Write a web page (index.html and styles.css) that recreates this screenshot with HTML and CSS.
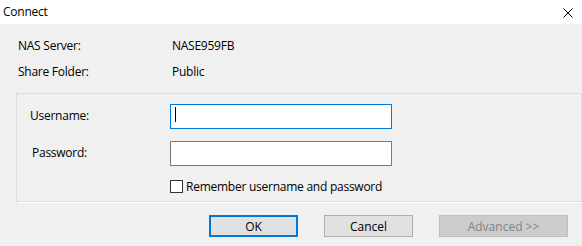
FILE: index.html
```html
<!DOCTYPE html>
<html lang="en">
<head>
  <meta charset="UTF-8">
  <title>Connect</title>
  <link rel="stylesheet" href="styles.css">
</head>
<body>

  <div class="titlebar">
    <span class="title">Connect</span>
    <svg class="close" width="10" height="10" viewBox="0 0 10 10">
      <path d="M0.5 0.5 L9.5 9.5 M9.5 0.5 L0.5 9.5" stroke="#000" stroke-width="1" fill="none"/>
    </svg>
  </div>

  <div class="dialog">
    <div class="info">
      <div class="info-row"><span class="info-label">NAS Server:</span><span>NASE959FB</span></div>
      <div class="info-row"><span class="info-label">Share Folder:</span><span>Public</span></div>
    </div>

    <div class="group">
      <div class="field">
        <label class="field-label">Username:</label>
        <div class="textbox-wrap">
          <input type="text" class="textbox focused">
          <span class="caret"></span>
        </div>
      </div>
      <div class="field">
        <label class="field-label pw">Password:</label>
        <div class="textbox-wrap">
          <input type="password" class="textbox">
        </div>
      </div>
      <div class="remember">
        <span class="check"></span>
        <span>Remember username and password</span>
      </div>
    </div>

    <div class="buttons">
      <button class="btn default">OK</button>
      <button class="btn">Cancel</button>
      <button class="btn wide" disabled>Advanced &gt;&gt;</button>
    </div>
  </div>

</body>
</html>
```

FILE: styles.css
```css
body {
  margin: 0;
  font-family: "Segoe UI", "Open Sans", sans-serif;
  font-size: 12px;
  letter-spacing: -0.25px;
  color: #000;
  background-color: #f0f0f0;
  width: 582px;
  height: 246px;
  overflow: hidden;
}
.titlebar {
  height: 24px;
  background-color: #ffffff;
  display: flex;
  align-items: center;
  justify-content: space-between;
  padding: 0 9px 0 3px;
}
.title {
  margin-top: -1px;
}
.close {
  display: block;
  margin-top: 1px;
}
.info {
  padding: 14px 0 0 18px;
}
.info-row {
  display: flex;
  height: 26px;
  line-height: 16px;
}
.info-label {
  width: 154px;
}
.group {
  margin: 3px 0 0 16px;
  width: 551px;
  height: 97px;
  border: 1px solid #dcdcdc;
  box-shadow: 1px 1px 0 #ffffff;
  padding: 10px 0 0 13px;
  box-sizing: content-box;
}
.field {
  display: flex;
  align-items: center;
  margin-bottom: 12px;
}
.field-label {
  width: 140px;
  margin-top: -2px;
}
.field-label.pw {
  padding-left: 2px;
  width: 138px;
}
.textbox-wrap {
  position: relative;
}
.textbox {
  display: block;
  box-sizing: border-box;
  width: 222px;
  height: 25px;
  margin: 0;
  border: 1px solid #7a7a7a;
  background: #ffffff;
  outline: none;
  font: inherit;
}
.textbox.focused {
  border-color: #0078d7;
}
.caret {
  position: absolute;
  left: 5px;
  top: 3px;
  width: 1px;
  height: 15px;
  background: #000;
}
.remember {
  display: flex;
  align-items: center;
  margin-left: 140px;
  gap: 3px;
}
.check {
  width: 11px;
  height: 11px;
  border: 1px solid #333333;
  background: #ffffff;
}
.buttons {
  display: flex;
  gap: 26px;
  padding: 13px 0 0 209px;
}
.btn {
  box-sizing: border-box;
  width: 89px;
  height: 22px;
  padding: 0;
  margin: 0;
  font: inherit;
  color: #000;
  background-color: #e1e1e1;
  border: 1px solid #adadad;
}
.btn.default {
  border: 2px solid #0078d7;
}
.btn.wide {
  width: 129px;
  background-color: #cccccc;
  border-color: #bfbfbf;
  color: #838383;
}
```
